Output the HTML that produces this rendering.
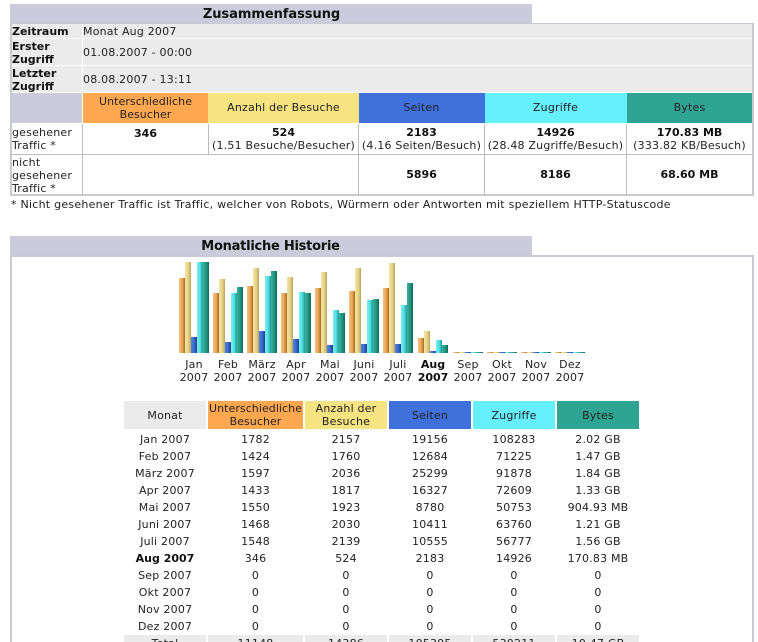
<!DOCTYPE html>
<html><head><meta charset="utf-8"><style>
html,body{margin:0;padding:0;background:#fff;width:758px;height:642px;overflow:hidden}
#p{position:relative;width:758px;height:642px;overflow:hidden;font:11px/13px "DejaVu Sans","Liberation Sans",sans-serif;color:#222;letter-spacing:.2px}
#p div{position:absolute;white-space:nowrap}
#p b{letter-spacing:0;color:#111}
#p .b{font-weight:bold;color:#111;letter-spacing:0}
#p .n{letter-spacing:.06px}
.t{transform:translateX(-50%);text-align:center}
.o{background:linear-gradient(90deg,#f2c184,#e8a655 55%,#a8681c)}
.y{background:linear-gradient(90deg,#f3e6a8,#e6d285 55%,#b8a45c)}
.u{background:linear-gradient(90deg,#4f82e6,#3c68cc 55%,#1f3f88)}
.c{background:linear-gradient(90deg,#7af2f2,#50dcdc 55%,#1c9a9c)}
.g{background:linear-gradient(90deg,#3fb09e,#209480 55%,#0c6a5a)}
</style></head><body><div id="p">

<div style="left:10px;top:4px;width:522px;height:19px;background:#cbcbdc"></div>
<div class="t b" style="left:271.5px;top:7px;font-size:13px;line-height:16px;letter-spacing:-.05px">Zusammenfassung</div>

<div style="left:10px;top:23px;width:744px;height:173px;background:#c9c9d2"></div>
<div style="left:12px;top:24px;width:740px;height:170px;background:#fff"></div>
<div style="left:12px;top:24px;width:70px;height:14px;background:#ebebeb"></div>
<div style="left:83px;top:24px;width:669px;height:14px;background:#ebebeb"></div>
<div style="left:12px;top:39px;width:70px;height:26px;background:#ebebeb"></div>
<div style="left:83px;top:39px;width:669px;height:26px;background:#ebebeb"></div>
<div style="left:12px;top:66px;width:70px;height:26px;background:#ebebeb"></div>
<div style="left:83px;top:66px;width:669px;height:26px;background:#ebebeb"></div>

<div style="left:12px;top:93px;width:70px;height:30px;background:#cbcbdc"></div>
<div style="left:83px;top:93px;width:125px;height:30px;background:#ffa850"></div>
<div style="left:208px;top:93px;width:151px;height:30px;background:#f6e382"></div>
<div style="left:359px;top:93px;width:126px;height:30px;background:#4070dc"></div>
<div style="left:485px;top:93px;width:142px;height:30px;background:#66f0fc"></div>
<div style="left:627px;top:93px;width:125px;height:30px;background:#30a492"></div>

<div style="left:12px;top:154px;width:740px;height:1px;background:#bcbcbc"></div>
<div style="left:82px;top:124px;width:1px;height:70px;background:#bcbcbc"></div>
<div style="left:208px;top:124px;width:1px;height:30px;background:#bcbcbc"></div>
<div style="left:358px;top:124px;width:1px;height:70px;background:#bcbcbc"></div>
<div style="left:484px;top:124px;width:1px;height:70px;background:#bcbcbc"></div>
<div style="left:626px;top:124px;width:1px;height:70px;background:#bcbcbc"></div>

<div class="b" style="left:12px;top:25px">Zeitraum</div>
<div class="b" style="left:12px;top:40px">Erster<br>Zugriff</div>
<div class="b" style="left:12px;top:67px">Letzter<br>Zugriff</div>
<div style="left:83px;top:25px">Monat Aug 2007</div>
<div style="left:83px;top:46px">01.08.2007 - 00:00</div>
<div style="left:83px;top:73px">08.08.2007 - 13:11</div>

<div class="t n" style="left:145.5px;top:95px">Unterschiedliche<br>Besucher</div>
<div class="t" style="left:283.5px;top:101px">Anzahl der Besuche</div>
<div class="t" style="left:421.5px;top:101px">Seiten</div>
<div class="t" style="left:555.5px;top:101px">Zugriffe</div>
<div class="t" style="left:689.5px;top:101px">Bytes</div>

<div style="left:12px;top:126px">gesehener<br>Traffic *</div>
<div style="left:12px;top:156px">nicht<br>gesehener<br>Traffic *</div>
<div class="t b" style="left:145.5px;top:127px">346</div>
<div class="t" style="left:283.5px;top:126px"><b>524</b><br>(1.51 Besuche/Besucher)</div>
<div class="t" style="left:421.5px;top:126px"><b>2183</b><br>(4.16 Seiten/Besuch)</div>
<div class="t" style="left:555.5px;top:126px"><b>14926</b><br>(28.48 Zugriffe/Besuch)</div>
<div class="t" style="left:689.5px;top:126px"><b>170.83 MB</b><br>(333.82 KB/Besuch)</div>
<div class="t b" style="left:421.5px;top:168px">5896</div>
<div class="t b" style="left:555.5px;top:168px">8186</div>
<div class="t b" style="left:689.5px;top:168px">68.60 MB</div>

<div style="left:11px;top:198px;letter-spacing:.25px">* Nicht gesehener Traffic ist Traffic, welcher von Robots, Würmern oder Antworten mit speziellem HTTP-Statuscode</div>

<div style="left:10px;top:236px;width:522px;height:19px;background:#cbcbdc"></div>
<div class="t b" style="left:270.5px;top:239px;font-size:13px;line-height:16px;letter-spacing:-.25px">Monatliche Historie</div>
<div style="left:10px;top:255px;width:744px;height:387px;background:#c9c9d8"></div>
<div style="left:12px;top:257px;width:740px;height:385px;background:#fff"></div>

<!-- Bars -->
<div class="o" style="left:179px;top:278px;width:6px;height:75px"></div><div class="y" style="left:185px;top:262px;width:6px;height:91px"></div><div class="u" style="left:191px;top:337px;width:6px;height:16px"></div><div class="c" style="left:197px;top:262px;width:6px;height:91px"></div><div class="g" style="left:203px;top:262px;width:6px;height:91px"></div>
<div class="o" style="left:213px;top:293px;width:6px;height:60px"></div><div class="y" style="left:219px;top:279px;width:6px;height:74px"></div><div class="u" style="left:225px;top:342px;width:6px;height:11px"></div><div class="c" style="left:231px;top:293px;width:6px;height:60px"></div><div class="g" style="left:237px;top:287px;width:6px;height:66px"></div>
<div class="o" style="left:247px;top:286px;width:6px;height:67px"></div><div class="y" style="left:253px;top:268px;width:6px;height:85px"></div><div class="u" style="left:259px;top:331px;width:6px;height:22px"></div><div class="c" style="left:265px;top:276px;width:6px;height:77px"></div><div class="g" style="left:271px;top:271px;width:6px;height:82px"></div>
<div class="o" style="left:281px;top:293px;width:6px;height:60px"></div><div class="y" style="left:287px;top:277px;width:6px;height:76px"></div><div class="u" style="left:293px;top:339px;width:6px;height:14px"></div><div class="c" style="left:299px;top:292px;width:6px;height:61px"></div><div class="g" style="left:305px;top:293px;width:6px;height:60px"></div>
<div class="o" style="left:315px;top:288px;width:6px;height:65px"></div><div class="y" style="left:321px;top:272px;width:6px;height:81px"></div><div class="u" style="left:327px;top:345px;width:6px;height:8px"></div><div class="c" style="left:333px;top:310px;width:6px;height:43px"></div><div class="g" style="left:339px;top:313px;width:6px;height:40px"></div>
<div class="o" style="left:349px;top:291px;width:6px;height:62px"></div><div class="y" style="left:355px;top:268px;width:6px;height:85px"></div><div class="u" style="left:361px;top:344px;width:6px;height:9px"></div><div class="c" style="left:367px;top:300px;width:6px;height:53px"></div><div class="g" style="left:373px;top:299px;width:6px;height:54px"></div>
<div class="o" style="left:383px;top:288px;width:6px;height:65px"></div><div class="y" style="left:389px;top:263px;width:6px;height:90px"></div><div class="u" style="left:395px;top:344px;width:6px;height:9px"></div><div class="c" style="left:401px;top:305px;width:6px;height:48px"></div><div class="g" style="left:407px;top:283px;width:6px;height:70px"></div>
<div class="o" style="left:418px;top:338px;width:6px;height:15px"></div><div class="y" style="left:424px;top:331px;width:6px;height:22px"></div><div class="u" style="left:430px;top:351px;width:6px;height:2px"></div><div class="c" style="left:436px;top:340px;width:6px;height:13px"></div><div class="g" style="left:442px;top:345px;width:6px;height:8px"></div>
<div class="o" style="left:453px;top:352px;width:6px;height:1px"></div><div class="y" style="left:459px;top:352px;width:6px;height:1px"></div><div class="u" style="left:465px;top:352px;width:6px;height:1px"></div><div class="c" style="left:471px;top:352px;width:6px;height:1px"></div><div class="g" style="left:477px;top:352px;width:6px;height:1px"></div>
<div class="o" style="left:487px;top:352px;width:6px;height:1px"></div><div class="y" style="left:493px;top:352px;width:6px;height:1px"></div><div class="u" style="left:499px;top:352px;width:6px;height:1px"></div><div class="c" style="left:505px;top:352px;width:6px;height:1px"></div><div class="g" style="left:511px;top:352px;width:6px;height:1px"></div>
<div class="o" style="left:521px;top:352px;width:6px;height:1px"></div><div class="y" style="left:527px;top:352px;width:6px;height:1px"></div><div class="u" style="left:533px;top:352px;width:6px;height:1px"></div><div class="c" style="left:539px;top:352px;width:6px;height:1px"></div><div class="g" style="left:545px;top:352px;width:6px;height:1px"></div>
<div class="o" style="left:555px;top:352px;width:6px;height:1px"></div><div class="y" style="left:561px;top:352px;width:6px;height:1px"></div><div class="u" style="left:567px;top:352px;width:6px;height:1px"></div><div class="c" style="left:573px;top:352px;width:6px;height:1px"></div><div class="g" style="left:579px;top:352px;width:6px;height:1px"></div>

<div class="t" style="left:194px;top:358px">Jan<br>2007</div>
<div class="t" style="left:228px;top:358px">Feb<br>2007</div>
<div class="t" style="left:262px;top:358px">März<br>2007</div>
<div class="t" style="left:296px;top:358px">Apr<br>2007</div>
<div class="t" style="left:330px;top:358px">Mai<br>2007</div>
<div class="t" style="left:364px;top:358px">Juni<br>2007</div>
<div class="t" style="left:398px;top:358px">Juli<br>2007</div>
<div class="t b" style="left:433px;top:358px">Aug<br>2007</div>
<div class="t" style="left:468px;top:358px">Sep<br>2007</div>
<div class="t" style="left:502px;top:358px">Okt<br>2007</div>
<div class="t" style="left:536px;top:358px">Nov<br>2007</div>
<div class="t" style="left:570px;top:358px">Dez<br>2007</div>

<!-- Table head -->
<div style="left:124px;top:401px;width:82px;height:28px;background:#ebebeb"></div>
<div style="left:208px;top:401px;width:95px;height:28px;background:#ffa850"></div>
<div style="left:305px;top:401px;width:82px;height:28px;background:#f6e382"></div>
<div style="left:389px;top:401px;width:82px;height:28px;background:#4070dc"></div>
<div style="left:473px;top:401px;width:82px;height:28px;background:#66f0fc"></div>
<div style="left:557px;top:401px;width:82px;height:28px;background:#30a492"></div>
<div class="t" style="left:165px;top:409px">Monat</div>
<div class="t n" style="left:255.5px;top:402px">Unterschiedliche<br>Besucher</div>
<div class="t" style="left:346px;top:402px">Anzahl der<br>Besuche</div>
<div class="t" style="left:430px;top:409px">Seiten</div>
<div class="t" style="left:514px;top:409px">Zugriffe</div>
<div class="t" style="left:598px;top:409px">Bytes</div>

<div class="t" style="left:165px;top:433px">Jan 2007</div><div class="t" style="left:255.5px;top:433px">1782</div><div class="t" style="left:346px;top:433px">2157</div><div class="t" style="left:430px;top:433px">19156</div><div class="t" style="left:514px;top:433px">108283</div><div class="t" style="left:598px;top:433px">2.02 GB</div>
<div class="t" style="left:165px;top:450px">Feb 2007</div><div class="t" style="left:255.5px;top:450px">1424</div><div class="t" style="left:346px;top:450px">1760</div><div class="t" style="left:430px;top:450px">12684</div><div class="t" style="left:514px;top:450px">71225</div><div class="t" style="left:598px;top:450px">1.47 GB</div>
<div class="t" style="left:165px;top:467px">März 2007</div><div class="t" style="left:255.5px;top:467px">1597</div><div class="t" style="left:346px;top:467px">2036</div><div class="t" style="left:430px;top:467px">25299</div><div class="t" style="left:514px;top:467px">91878</div><div class="t" style="left:598px;top:467px">1.84 GB</div>
<div class="t" style="left:165px;top:484px">Apr 2007</div><div class="t" style="left:255.5px;top:484px">1433</div><div class="t" style="left:346px;top:484px">1817</div><div class="t" style="left:430px;top:484px">16327</div><div class="t" style="left:514px;top:484px">72609</div><div class="t" style="left:598px;top:484px">1.33 GB</div>
<div class="t" style="left:165px;top:501px">Mai 2007</div><div class="t" style="left:255.5px;top:501px">1550</div><div class="t" style="left:346px;top:501px">1923</div><div class="t" style="left:430px;top:501px">8780</div><div class="t" style="left:514px;top:501px">50753</div><div class="t" style="left:598px;top:501px">904.93 MB</div>
<div class="t" style="left:165px;top:518px">Juni 2007</div><div class="t" style="left:255.5px;top:518px">1468</div><div class="t" style="left:346px;top:518px">2030</div><div class="t" style="left:430px;top:518px">10411</div><div class="t" style="left:514px;top:518px">63760</div><div class="t" style="left:598px;top:518px">1.21 GB</div>
<div class="t" style="left:165px;top:535px">Juli 2007</div><div class="t" style="left:255.5px;top:535px">1548</div><div class="t" style="left:346px;top:535px">2139</div><div class="t" style="left:430px;top:535px">10555</div><div class="t" style="left:514px;top:535px">56777</div><div class="t" style="left:598px;top:535px">1.56 GB</div>
<div class="t b" style="left:165px;top:552px">Aug 2007</div><div class="t" style="left:255.5px;top:552px">346</div><div class="t" style="left:346px;top:552px">524</div><div class="t" style="left:430px;top:552px">2183</div><div class="t" style="left:514px;top:552px">14926</div><div class="t" style="left:598px;top:552px">170.83 MB</div>
<div class="t" style="left:165px;top:569px">Sep 2007</div><div class="t" style="left:255.5px;top:569px">0</div><div class="t" style="left:346px;top:569px">0</div><div class="t" style="left:430px;top:569px">0</div><div class="t" style="left:514px;top:569px">0</div><div class="t" style="left:598px;top:569px">0</div>
<div class="t" style="left:165px;top:586px">Okt 2007</div><div class="t" style="left:255.5px;top:586px">0</div><div class="t" style="left:346px;top:586px">0</div><div class="t" style="left:430px;top:586px">0</div><div class="t" style="left:514px;top:586px">0</div><div class="t" style="left:598px;top:586px">0</div>
<div class="t" style="left:165px;top:603px">Nov 2007</div><div class="t" style="left:255.5px;top:603px">0</div><div class="t" style="left:346px;top:603px">0</div><div class="t" style="left:430px;top:603px">0</div><div class="t" style="left:514px;top:603px">0</div><div class="t" style="left:598px;top:603px">0</div>
<div class="t" style="left:165px;top:620px">Dez 2007</div><div class="t" style="left:255.5px;top:620px">0</div><div class="t" style="left:346px;top:620px">0</div><div class="t" style="left:430px;top:620px">0</div><div class="t" style="left:514px;top:620px">0</div><div class="t" style="left:598px;top:620px">0</div>

<div style="left:124px;top:635px;width:82px;height:7px;background:#ebebeb"></div>
<div style="left:208px;top:635px;width:95px;height:7px;background:#ebebeb"></div>
<div style="left:305px;top:635px;width:82px;height:7px;background:#ebebeb"></div>
<div style="left:389px;top:635px;width:82px;height:7px;background:#ebebeb"></div>
<div style="left:473px;top:635px;width:82px;height:7px;background:#ebebeb"></div>
<div style="left:557px;top:635px;width:82px;height:7px;background:#ebebeb"></div>
<div class="t" style="left:165px;top:637px">Total</div><div class="t" style="left:255.5px;top:637px">11148</div><div class="t" style="left:346px;top:637px">14386</div><div class="t" style="left:430px;top:637px">105395</div><div class="t" style="left:514px;top:637px">530211</div><div class="t" style="left:598px;top:637px">10.47 GB</div>

</div></body></html>
